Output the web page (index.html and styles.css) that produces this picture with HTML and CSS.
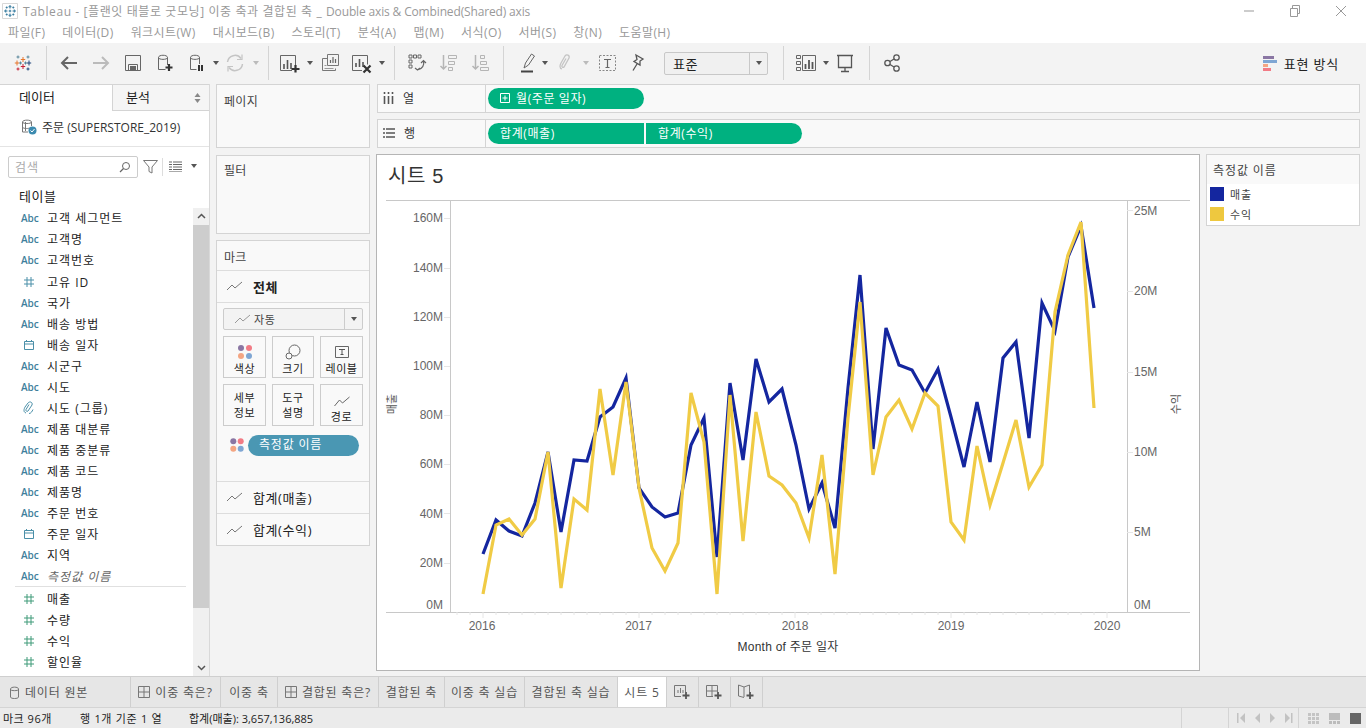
FILE: index.html
```html
<!DOCTYPE html>
<html lang="ko">
<head>
<meta charset="utf-8">
<title>Tableau</title>
<link rel="stylesheet" href="styles.css">
</head>
<body>
<div class="app">
  <header class="titlebar">
    <svg class="app-icon" width="16" height="16" viewBox="0 0 16 16"><path d="M.5.5h15v15H.5z" fill="none" stroke="#d8d8d8"/><g stroke="#3b7ea1" stroke-width="1.100"><path d="M8 2v3.500M6.500 3.700h3M8 10.500V14M6.500 12.300h3M2 8h3.500M3.700 6.500v3M10.500 8H14M12.300 6.500v3M6.700 8h2.600M8 6.700v2.600"/><path d="M4.700 3.500v2M3.700 4.500h2M11.300 3.500v2M10.300 4.500h2M4.700 10.500v2M3.700 11.500h2M11.300 10.500v2M10.300 11.500h2"/></g></svg>
    <span class="title-text"><span class="title-ko">Tableau - [플랜잇 태블로 굿모닝] 이중 축과 결합된 축 _ </span><span class="title-en">Double axis &amp; Combined(Shared) axis</span></span>
    <div class="win-btns">
      <svg width="12" height="12" viewBox="0 0 12 12"><path d="M1 6h10" stroke="#999"/></svg>
      <svg width="12" height="12" viewBox="0 0 12 12"><path d="M1.500 3.500h7v8h-7zM3.500 3.500V.5h7v8h-2" fill="none" stroke="#999"/></svg>
      <svg width="12" height="12" viewBox="0 0 12 12"><path d="M1 1l10 10M11 1L1 11" stroke="#999"/></svg>
    </div>
  </header>
  <nav class="menubar">
    <span>파일(F)</span><span>데이터(D)</span><span>워크시트(W)</span><span>대시보드(B)</span><span>스토리(T)</span><span>분석(A)</span><span>맵(M)</span><span>서식(O)</span><span>서버(S)</span><span>창(N)</span><span>도움말(H)</span>
  </nav>
  <div class="toolbar">
    <svg class="tb-btn" viewBox="0 0 32 32"><g stroke-width="1"><path d="M16 10v5M13.800 12.500h4.400" stroke="#e8762c"/><path d="M16 17v5M13.800 19.500h4.400" stroke="#c72035"/><path d="M10 13.500v5M7.800 16h4.400" stroke="#e8762c"/><path d="M22 13.500v5M19.800 16h4.400" stroke="#1f447b"/><path d="M13.500 14.500v3M12 16h3M18.500 14.500v3M17 16h3" stroke="#5b879b"/><path d="M11 8.500v3M9.500 10h3M21 8.500v3M19.500 10h3" stroke="#5b879b"/><path d="M11 20.500v3M9.500 22h3" stroke="#c72035"/><path d="M21 20.500v3M19.500 22h3" stroke="#1f447b"/></g></svg>
    <i class="tb-sep"></i>
    <svg class="tb-btn" viewBox="0 0 32 32"><path d="M24 16H9M15 10l-6 6 6 6" fill="none" stroke="#666" stroke-width="2"/></svg>
    <svg class="tb-btn" viewBox="0 0 32 32"><path d="M8 16h15M17 10l6 6-6 6" fill="none" stroke="#bbb" stroke-width="2"/></svg>
    <svg class="tb-btn" viewBox="0 0 32 32"><path d="M8.500 8.500h15v15h-15zM11.500 23.500v-6h9v6" fill="none" stroke="#666"/><rect x="13" y="19" width="6" height="4" fill="#666"/></svg>
    <svg class="tb-btn" viewBox="0 0 32 32"><path d="M16.500 22.500h-7v-12c0-3 9-3 9 0V18M9.500 10.500c0 2.500 9 2.500 9 0" fill="none" stroke="#666"/><path d="M20 17v7M16.500 20.500h7" stroke="#333" stroke-width="2.200"/></svg>
    <svg class="tb-btn" viewBox="0 0 32 32"><path d="M15.500 22.500h-6v-12c0-3 9-3 9 0V17M9.500 10.500c0 2.500 9 2.500 9 0" fill="none" stroke="#666"/><path d="M18 18v6M21 18v6" stroke="#333" stroke-width="2"/></svg>
    <span class="tb-caret w6"><i class="caret"></i></span>
    <svg class="tb-btn" viewBox="0 0 32 32"><path d="M8.500 15a7.500 7.500 0 0 1 13.500-3.500M23.500 17A7.500 7.500 0 0 1 10 20.500" fill="none" stroke="#c4c4c4" stroke-width="1.500"/><path d="M23 7.500v5h-5M9 24.500v-5h5" fill="none" stroke="#c4c4c4" stroke-width="1.200"/></svg>
    <span class="tb-caret w10"><i class="caret off"></i></span>
    <i class="tb-sep tight"></i>
    <svg class="tb-btn" viewBox="0 0 32 32"><path d="M7.500 8.500h15V20M7.500 8.500v15H19" fill="none" stroke="#666"/><path d="M11 22v-5M14.500 22v-9M18 22v-6" stroke="#555" stroke-width="1.600"/><path d="M22.500 18v7.500M18.500 22h8" stroke="#333" stroke-width="2.200"/></svg>
    <span class="tb-caret w9"><i class="caret"></i></span>
    <svg class="tb-btn" viewBox="0 0 32 32"><path d="M13.500 11.500h-5v12h13v-2" fill="none" stroke="#777"/><path d="M13.500 7.500h11v11h-11z" fill="#f3f3f3" stroke="#777"/><path d="M16.500 16v-3M19 16v-6M21.500 16v-4" stroke="#666" stroke-width="1.200"/><path d="M10.500 21.500h9M10.500 18.500h2" stroke="#999"/></svg>
    <svg class="tb-btn" viewBox="0 0 32 32"><path d="M6.500 8.500h15v9M6.500 8.500v15H16" fill="none" stroke="#666"/><path d="M10 20v-4M13.500 20v-8M17 20v-5" stroke="#555" stroke-width="1.600"/><path d="M17.500 18.500l7 7M24.500 18.500l-7 7" stroke="#333" stroke-width="2.200"/></svg>
    <span class="tb-caret w8"><i class="caret"></i></span>
    <i class="tb-sep tight-5"></i>
    <svg class="tb-btn" viewBox="0 0 32 32"><path d="M9 8h3v3H9zM13.500 8h3v3h-3zM18 8h3v3h-3zM9 13h3v3H9zM9 18h3v3H9z" fill="none" stroke="#666"/><path d="M23.500 14c1 4-1 8-6 9M15 21l2.500 2 2.500-2M21 16l2.500-2.500L26 16" fill="none" stroke="#666" stroke-width="1.200"/></svg>
    <svg class="tb-btn" viewBox="0 0 32 32"><path d="M11.500 8v14M8.500 19l3 3 3-3" fill="none" stroke="#b5b5b5" stroke-width="1.500"/><path d="M16.500 8.500h8v3h-8zM16.500 14.500h6v3h-6zM16.500 20.500h4v3h-4z" fill="none" stroke="#b5b5b5"/></svg>
    <svg class="tb-btn" viewBox="0 0 32 32"><path d="M11.500 8v14M8.500 19l3 3 3-3" fill="none" stroke="#b5b5b5" stroke-width="1.500"/><path d="M16.500 8.500h4v3h-4zM16.500 14.500h6v3h-6zM16.500 20.500h8v3h-8z" fill="none" stroke="#b5b5b5"/></svg>
    <i class="tb-sep"></i>
    <svg class="tb-btn narrow" viewBox="0 0 30 32"><path d="M14 21l1.500-5 6-9 3 2-6 9z" fill="none" stroke="#666"/><path d="M11 24.500h12" stroke="#444" stroke-width="2"/></svg>
    <span class="tb-caret w10"><i class="caret"></i></span>
    <svg class="tb-btn clip" viewBox="0 0 30 32"><path d="M12 22c-3-1-2-4-1-6l4-7c1.500-2 5-1 4 2l-5 9c-1 1-2.500 0-2-1.500l4-7" fill="none" stroke="#c4c4c4" stroke-width="1.300"/></svg>
    <span class="tb-caret w11"><i class="caret off"></i></span>
    <svg class="tb-btn" viewBox="0 0 32 32"><path d="M8.500 8.500h16v15h-16z" fill="none" stroke="#888" stroke-dasharray="2 1.500"/><path d="M13 12.500h7M16.500 12.500v8M14.500 20.500h4" fill="none" stroke="#666" stroke-width="1.200"/></svg>
    <svg class="tb-btn pin" viewBox="0 0 30 32"><path d="M13 8l7 4-3 2 0 4-6-3.500 3-2zM14 17l-4 6.500" fill="none" stroke="#555" stroke-width="1.300"/></svg>
    <div class="tb-select"><span class="tb-select-text">표준</span><span class="tb-select-btn"><i class="caret"></i></span></div>
    <i class="tb-sep wide"></i>
    <svg class="tb-btn" viewBox="0 0 32 32"><path d="M6.500 8.500h4v3h-4zM6.500 14.500h4v3h-4zM6.500 20.500h4v3h-4zM12.500 8.500h13v15h-13z" fill="none" stroke="#666"/><path d="M15.500 22v-5M19 22v-9M22.500 22v-7" stroke="#555" stroke-width="1.800"/></svg>
    <span class="tb-caret w7"><i class="caret"></i></span>
    <svg class="tb-btn" viewBox="0 0 32 32"><path d="M8 8.500h16M9.500 9v11.500h13V9M16 20.500v4M12 24.500h8" fill="none" stroke="#555" stroke-width="1.300"/></svg>
    <i class="tb-sep last"></i>
    <svg class="tb-btn" viewBox="0 0 32 32"><g fill="none" stroke="#555" stroke-width="1.300"><circle cx="11.500" cy="16" r="2.700"/><circle cx="20.500" cy="10.500" r="2.700"/><circle cx="20.500" cy="21.500" r="2.700"/><path d="M14 14.500l4-2.500M14 17.500l4 2.500"/></g></svg>
    <div class="showme">
      <svg width="14" height="15" viewBox="0 0 14 15"><rect width="11" height="3" fill="#8a76a3"/><rect y="4" width="14" height="3" fill="#7fa6d3"/><rect y="8" width="5" height="3" fill="#f4a582"/><rect y="12" width="8" height="3" fill="#f27b85"/></svg>
      <span>표현 방식</span>
    </div>
  </div>

  <main class="workspace">
    <aside class="datapane">
      <div class="pane-tabs"><span class="tab-data">데이터</span><span class="tab-analysis">분석<svg width="7" height="10" viewBox="0 0 7 10"><path d="M3.500 0l3 4h-6zM3.500 10l3-4h-6z" fill="#888"/></svg></span></div>
      <div class="source">
        <svg width="18" height="18" viewBox="0 0 18 18"><path d="M8 14H2.500V4c0-2.500 9-2.500 9 0v4M2.500 4c0 2 9 2 9 0M2.500 9c0 1.500 5 2 7 1M5.500 4v9" fill="none" stroke="#777"/><circle cx="12.500" cy="12.500" r="4" fill="#3c8bb0"/><path d="M10.500 12.500l1.500 1.500 2.500-3" fill="none" stroke="#fff"/></svg>
        <span>주문 (SUPERSTORE_2019)</span>
      </div>
      <div class="searchrow">
        <div class="searchbox"><span>검색</span><svg width="12" height="12" viewBox="0 0 12 12"><circle cx="7" cy="5" r="3.500" fill="none" stroke="#666"/><path d="M4.500 7.500L1 11" stroke="#666" stroke-width="1.300"/></svg></div>
        <svg class="filter" width="15" height="15" viewBox="0 0 15 15"><path d="M.5 1.500h14L9 8v6L6 12.500V8z" fill="none" stroke="#777"/></svg>
        <i class="search-sep"></i>
        <svg class="list-ic" width="13" height="11" viewBox="0 0 13 11"><path d="M0 1h3M4 1h9M0 3.500h3M4 3.500h9M0 6h3M4 6h9M0 8.500h3M4 8.500h9" stroke="#666"/><path d="M0 10.500h13" stroke="#aaa"/></svg>
        <i class="caret list-caret"></i>
      </div>
      <div class="tables-head">테이블</div>
      <div class="fields-wrap">
        <ul class="fields">
          <li><span class="ty abc">Abc</span>고객 세그먼트</li>
          <li><span class="ty abc">Abc</span>고객명</li>
          <li><span class="ty abc">Abc</span>고객번호</li>
          <li><span class="ty"><svg class="hash dim" width="12" height="12" viewBox="0 0 12 12"><path d="M4 1v10M8 1v10M1 4h10M1 8h10"/></svg></span>고유 ID</li>
          <li><span class="ty abc">Abc</span>국가</li>
          <li><span class="ty abc">Abc</span>배송 방법</li>
          <li><span class="ty"><svg width="12" height="12" viewBox="0 0 12 12"><path d="M1.500 2.500h9v8h-9zM1.500 5h9M3.500 1v2M8.500 1v2" fill="none" stroke="#4a8fa8"/></svg></span>배송 일자</li>
          <li><span class="ty abc">Abc</span>시군구</li>
          <li><span class="ty abc">Abc</span>시도</li>
          <li><span class="ty"><svg width="12" height="14" viewBox="0 0 12 14"><path d="M3 12c-3-1-2-4-1-6l3-4c1.500-2 5-1 4 2l-4 6c-1 1-2.500 0-2-1.500l3-5M6 12.500c2 0 3-2 4-4" fill="none" stroke="#4a8fa8"/></svg></span>시도 (그룹)</li>
          <li><span class="ty abc">Abc</span>제품 대분류</li>
          <li><span class="ty abc">Abc</span>제품 중분류</li>
          <li><span class="ty abc">Abc</span>제품 코드</li>
          <li><span class="ty abc">Abc</span>제품명</li>
          <li><span class="ty abc">Abc</span>주문 번호</li>
          <li><span class="ty"><svg width="12" height="12" viewBox="0 0 12 12"><path d="M1.500 2.500h9v8h-9zM1.500 5h9M3.500 1v2M8.500 1v2" fill="none" stroke="#4a8fa8"/></svg></span>주문 일자</li>
          <li><span class="ty abc">Abc</span>지역</li>
          <li class="generated"><span class="ty abc">Abc</span>측정값 이름</li>
          <li><span class="ty"><svg class="hash" width="12" height="12" viewBox="0 0 12 12"><path d="M4 1v10M8 1v10M1 4h10M1 8h10"/></svg></span>매출</li>
          <li><span class="ty"><svg class="hash" width="12" height="12" viewBox="0 0 12 12"><path d="M4 1v10M8 1v10M1 4h10M1 8h10"/></svg></span>수량</li>
          <li><span class="ty"><svg class="hash" width="12" height="12" viewBox="0 0 12 12"><path d="M4 1v10M8 1v10M1 4h10M1 8h10"/></svg></span>수익</li>
          <li><span class="ty"><svg class="hash" width="12" height="12" viewBox="0 0 12 12"><path d="M4 1v10M8 1v10M1 4h10M1 8h10"/></svg></span>할인율</li>
        </ul>
        <div class="scrollbar">
          <span class="sb-btn sb-up"><svg width="9" height="6" viewBox="0 0 9 6"><path d="M1 5l3.500-3.500L8 5" fill="none" stroke="#555" stroke-width="1.500"/></svg></span>
          <span class="sb-thumb"></span>
          <span class="sb-track"></span>
          <span class="sb-btn"><svg width="9" height="6" viewBox="0 0 9 6"><path d="M1 1l3.500 3.500L8 1" fill="none" stroke="#555" stroke-width="1.500"/></svg></span>
        </div>
      </div>
    </aside>

    <section class="cards">
      <div class="card pages"><div class="card-title">페이지</div></div>
      <div class="card filters"><div class="card-title">필터</div></div>
      <div class="card marks">
        <div class="marks-title">마크</div>
        <div class="marks-row strong"><svg class="line-ic" width="16" height="10" viewBox="0 0 16 10"><path d="M0 9l5-5 3 3 7-6" fill="none" stroke="#777"/></svg>전체</div>
        <div class="marks-all">
          <div class="mark-select"><svg width="16" height="10" viewBox="0 0 16 10"><path d="M0 9l5-5 3 3 7-6" fill="none" stroke="#999"/></svg><span>자동</span><span class="mark-select-btn"><i class="caret"></i></span></div>
          <div class="mark-grid">
            <div class="mbtn"><svg width="16" height="16" viewBox="0 0 16 16"><circle cx="4" cy="4" r="3" fill="#8a76a3"/><circle cx="12" cy="4" r="3" fill="#f27b85"/><circle cx="4" cy="12" r="3" fill="#f4a582"/><circle cx="12" cy="12" r="3" fill="#7fa6d3"/></svg><span>색상</span></div>
            <div class="mbtn"><svg width="16" height="16" viewBox="0 0 16 16"><circle cx="9.500" cy="6.500" r="5.500" fill="none" stroke="#666"/><circle cx="4" cy="12" r="3" fill="#fafafa" stroke="#666"/></svg><span>크기</span></div>
            <div class="mbtn"><svg width="16" height="16" viewBox="0 0 16 16"><path d="M1.500 2.500h13v11h-13z" fill="none" stroke="#666"/><path d="M5 5.500h6M8 5.500v5M6.500 10.500h3" fill="none" stroke="#555"/></svg><span>레이블</span></div>
            <div class="mbtn text">세부<br>정보</div>
            <div class="mbtn text">도구<br>설명</div>
            <div class="mbtn"><svg width="16" height="12" viewBox="0 0 16 12"><path d="M.5 10l5-6 3 3 7-6" fill="none" stroke="#666"/></svg><span>경로</span></div>
          </div>
          <div class="mark-pill-row">
            <svg width="14" height="14" viewBox="0 0 14 14"><circle cx="3.300" cy="3.300" r="3" fill="#8a76a3"/><circle cx="10.700" cy="3.300" r="3" fill="#f27b85"/><circle cx="3.300" cy="10.700" r="3" fill="#f4a582"/><circle cx="10.700" cy="10.700" r="3" fill="#7fa6d3"/></svg>
            <span class="mark-pill">측정값 이름</span>
          </div>
        </div>
        <div class="marks-row"><svg class="line-ic" width="16" height="10" viewBox="0 0 16 10"><path d="M0 9l5-5 3 3 7-6" fill="none" stroke="#777"/></svg>합계(매출)</div>
        <div class="marks-row"><svg class="line-ic" width="16" height="10" viewBox="0 0 16 10"><path d="M0 9l5-5 3 3 7-6" fill="none" stroke="#777"/></svg>합계(수익)</div>
      </div>
    </section>

    <section class="main-area">
      <div class="shelf">
        <div class="shelf-label"><svg width="11" height="12" viewBox="0 0 11 12"><path d="M1.500 4v8M5.500 4v8M9.500 4v8M1.500 0v2M5.500 0v2M9.500 0v2" stroke="#555" stroke-width="1.600"/></svg><span>열</span></div>
        <div class="shelf-pills"><span class="pill"><svg width="10" height="10" viewBox="0 0 10 10"><path d="M.5.500h9v9h-9zM5 2.500v5M2.500 5h5" fill="none" stroke="#fff"/></svg>월(주문 일자)</span></div>
      </div>
      <div class="shelf">
        <div class="shelf-label"><svg width="12" height="10" viewBox="0 0 12 10"><path d="M3 1h9M3 5h9M3 9h9M0 1h2M0 5h2M0 9h2" stroke="#555" stroke-width="1.500"/></svg><span>행</span></div>
        <div class="shelf-pills"><span class="pill left">합계(매출)</span><span class="pill right">합계(수익)</span></div>
      </div>
      <div class="view-row">
        <div class="viz">
          <h1 class="viz-title">시트 5</h1>
          <svg class="chart" viewBox="377 200 822 470" width="822" height="470">
            <g stroke="#c8c8c8" fill="none">
              <path d="M386 200.500H1190M386 612.500H1190M450.500 200V612M1127.500 200V612"/>
            </g>
            <g stroke="#e6e6e6" fill="none">
              <path d="M444 218.500h6M444 268.500h6M444 317.500h6M444 366.500h6M444 415.500h6M444 464.500h6M444 513.500h6M444 563.500h6M1127 210.500h6M1127 291.500h6M1127 372.500h6M1127 452.500h6M1127 532.500h6"/>
              <path class="ticks" d="M457 612v3M470 612v3M483 612v6M496 612v3M509 612v3M522 612v3M535 612v3M548 612v3M561 612v3M574 612v3M587 612v3M600 612v3M613 612v3M626 612v3M639 612v6M652 612v3M665 612v3M678 612v3M691 612v3M704 612v3M717 612v3M730 612v3M743 612v3M756 612v3M769 612v3M782 612v3M795 612v6M808 612v3M821 612v3M834 612v3M847 612v3M860 612v3M873 612v3M886 612v3M899 612v3M912 612v3M925 612v3M938 612v3M951 612v6M964 612v3M977 612v3M990 612v3M1003 612v3M1016 612v3M1029 612v3M1042 612v3M1055 612v3M1068 612v3M1081 612v3M1094 612v3M1107 612v6"/>
            </g>
            <g class="axis-text">
              <text x="443" y="222" text-anchor="end">160M</text>
              <text x="443" y="272" text-anchor="end">140M</text>
              <text x="443" y="321" text-anchor="end">120M</text>
              <text x="443" y="370" text-anchor="end">100M</text>
              <text x="443" y="419" text-anchor="end">80M</text>
              <text x="443" y="468" text-anchor="end">60M</text>
              <text x="443" y="518" text-anchor="end">40M</text>
              <text x="443" y="567" text-anchor="end">20M</text>
              <text x="443" y="609" text-anchor="end">0M</text>
              <text x="1134" y="215">25M</text>
              <text x="1134" y="295">20M</text>
              <text x="1134" y="376">15M</text>
              <text x="1134" y="456">10M</text>
              <text x="1134" y="536">5M</text>
              <text x="1134" y="609">0M</text>
              <text x="482" y="630" text-anchor="middle">2016</text>
              <text x="638.500" y="630" text-anchor="middle">2017</text>
              <text x="795" y="630" text-anchor="middle">2018</text>
              <text x="951" y="630" text-anchor="middle">2019</text>
              <text x="1107" y="630" text-anchor="middle">2020</text>
            </g>
            <text class="axis-title" x="788" y="651" text-anchor="middle">Month of 주문 일자</text>
            <text class="axis-name" transform="translate(396 404) rotate(-90)" text-anchor="middle">매출</text>
            <text class="axis-name" transform="translate(1180 404) rotate(-90)" text-anchor="middle">수익</text>
            <polyline class="line blue" points="483,554 496,520 509,531 522,536 535,503 548,452 561,532 574,460 587,461 600,417 613,407 626,378 639,488 652,507 665,517 678,513 691,445 704,418 717,557 730,383 743,460 756,359 769,402 782,389 796,445 809,509 822,483 835,528 848,388 860,275 873,449 886,328 899,365 912,370 925,393 938,369 951,417 964,467 977,402 990,462 1003,358 1016,342 1029,438 1042,303 1055,331 1068,257 1081,226 1094,308"/>
            <polyline class="line yellow" points="483,594 496,525 509,519 522,535 535,519 548,452 561,588 574,499 587,510 600,389 613,475 626,382 639,488 652,548 665,571 678,543 691,393 704,442 717,594 730,395 743,541 756,412 769,476 782,485 796,503 809,538 822,455 835,574 848,418 860,302 873,475 886,417 899,400 912,429 925,393 938,406 951,522 964,540 977,446 990,505 1003,463 1016,420 1029,487 1042,465 1055,312 1068,255 1081,222 1094,408"/>
          </svg>
        </div>
        <aside class="legend">
          <div class="legend-title">측정값 이름</div>
          <div class="legend-row"><i class="swatch sw-blue"></i>매출</div>
          <div class="legend-row"><i class="swatch sw-yellow"></i>수익</div>
        </aside>
      </div>
    </section>
  </main>

  <div class="tabs">
    <span class="tab source-tab"><svg width="9" height="13" viewBox="0 0 9 13"><path d="M.5 3v8c0 2 8 2 8 0V3c0-2.500-8-2.500-8 0zM.5 3.500c0 1.500 8 1.500 8 0" fill="none" stroke="#777"/></svg>데이터 원본</span>
    <span class="tab t1"><svg width="12" height="12" viewBox="0 0 12 12"><path d="M.5.500h11v11H.5zM6 .5v11M.5 6h11" fill="none" stroke="#777"/></svg>이중 축은?</span>
    <span class="tab t2">이중 축</span>
    <span class="tab t3"><svg width="12" height="12" viewBox="0 0 12 12"><path d="M.5.500h11v11H.5zM6 .5v11M.5 6h11" fill="none" stroke="#777"/></svg>결합된 축은?</span>
    <span class="tab t4">결합된 축</span>
    <span class="tab t5">이중 축 실습</span>
    <span class="tab t6">결합된 축 실습</span>
    <span class="tab active">시트 5</span>
    <span class="tab add"><svg width="17" height="16" viewBox="0 0 17 16"><path d="M.5 1.500h11V8M.5 1.500v11H7" fill="none" stroke="#777"/><path d="M4 9V6M6.500 9V4M9 9V6" stroke="#777"/><path d="M12 8v7M8.500 11.500h7" stroke="#555" stroke-width="1.800"/></svg></span>
    <span class="tab add"><svg width="17" height="16" viewBox="0 0 17 16"><path d="M7 12.500H.5v-11h11V8M6 1.500v11M.5 7h11" fill="none" stroke="#777"/><path d="M12 8v7M8.500 11.500h7" stroke="#555" stroke-width="1.800"/></svg></span>
    <span class="tab add"><svg width="17" height="16" viewBox="0 0 17 16"><path d="M6 13.500l-5.500-1.500v-11L6 3l5.500-2v7M6 3v10" fill="none" stroke="#777"/><path d="M12 8v7M8.500 11.500h7" stroke="#555" stroke-width="1.800"/></svg></span>
  </div>
  <footer class="status">
    <span class="st1">마크 96개</span><span class="st2">행 1개 기준 1 열</span><span class="st3">합계(매출): 3,657,136,885</span>
    <div class="st-nav">
      <span class="st-cell st-gap"></span>
      <span class="st-cell st-arrows"><svg width="56" height="10" viewBox="0 0 56 10"><g fill="#c2c2c2"><path d="M0 0h1.500v10H0zM8 0v10L3 5zM23 0v10l-5-5zM33 0l5 5-5 5zM48 0l5 5-5 5zM54 0h1.500v10H54z"/></g></svg></span>
      <span class="st-cell st-views">
        <svg width="11" height="11" viewBox="0 0 11 11"><path d="M0 0h3v3H0zM4 0h3v3H4zM8 0h3v3H8zM0 4h3v3H0zM4 4h3v3H4zM8 4h3v3H8zM0 8h3v3H0zM4 8h3v3H4zM8 8h3v3H8z" fill="#c4c4c4"/></svg>
        <svg width="11" height="11" viewBox="0 0 11 11"><path d="M0 0h11v7H0zM0 8h3v3H0zM4 8h3v3H4zM8 8h3v3H8z" fill="#bcbcbc"/></svg>
        <svg width="11" height="11" viewBox="0 0 11 11"><path d="M0 0h11v11H0z" fill="#666"/></svg>
      </span>
    </div>
  </footer>
</div>
</body>
</html>
```
FILE: styles.css
```css
* { box-sizing: border-box; }
html, body { margin: 0; padding: 0; }
body {
  width: 1366px;
  height: 728px;
  overflow: hidden;
  font-family: "Open Sans", "Noto Sans CJK KR", sans-serif;
  font-size: 12px;
  color: #333;
  background: #f3f3f3;
}
.app { display: flex; flex-direction: column; height: 728px; }

.titlebar { height: 22px; background: #fff; display: flex; align-items: center; padding-left: 2px; color: #999; }
.app-icon { margin-right: 5px; flex: none; }
.title-text { font-size: 12px; white-space: pre; }
.title-ko { letter-spacing: .6px; }
.title-en { letter-spacing: -.15px; }
.win-btns { margin-left: auto; display: flex; gap: 34px; padding-right: 19px; align-items: center; }

.menubar { height: 21px; background: #fff; display: flex; gap: 17px; padding-left: 8px; align-items: center; color: #999; white-space: nowrap; letter-spacing: .4px; }

.toolbar { height: 41px; background: #f3f3f3; display: flex; align-items: center; padding-left: 7px; }
.tb-btn { width: 32px; height: 32px; flex: none; }
.tb-btn.narrow { width: 30px; }
.tb-btn.clip { width: 30px; }
.tb-btn.pin { width: 30px; }
.tb-sep { width: 1px; height: 34px; background: #d4d4d4; margin: 0 6px 0 7px; flex: none; }
.tb-sep.tight { margin-left: 7px; margin-right: 4px; }
.tb-sep.tight-5 { margin-left: 8px; margin-right: 5px; }
.tb-sep.wide { margin-left: 15px; }
.tb-sep.last { margin-left: 8px; }
.tb-caret { display: flex; justify-content: center; flex: none; }
.w6 { width: 6px; } .w7 { width: 7px; } .w8 { width: 8px; } .w9 { width: 9px; } .w10 { width: 10px; } .w11 { width: 11px; }
.caret { display: block; width: 0; height: 0; border-left: 3px solid transparent; border-right: 3px solid transparent; border-top: 4px solid #555; flex: none; }
.caret.off { border-top-color: #bbb; }
.tb-select { width: 104px; height: 23px; margin-left: 11px; display: flex; align-items: center; border: 1px solid #c8c8c8; border-radius: 2px; background: #f0f0f0; font-size: 13px; color: #222; flex: none; }
.tb-select-text { flex: 1; padding-left: 8px; letter-spacing: .5px; }
.tb-select-btn { width: 18px; height: 100%; border-left: 1px solid #c8c8c8; display: flex; align-items: center; justify-content: center; }
.showme { margin-left: auto; padding-right: 27px; display: flex; align-items: center; gap: 7px; font-size: 13px; color: #222; letter-spacing: .8px; }

.workspace { height: 593px; display: flex; background: #f3f3f3; }

.datapane { width: 210px; flex: none; background: #fff; border-right: 1px solid #d9d9d9; display: flex; flex-direction: column; }
.pane-tabs { height: 27px; display: flex; font-size: 13px; color: #222; border-top: 1px solid #d4d4d4; }
.tab-data { width: 112px; padding: 2px 0 0 19px; }
.tab-analysis { flex: 1; padding: 2px 8px 0 13px; background: #f5f5f5; border: 1px solid #d4d4d4; border-width: 0 0 1px 1px; display: flex; justify-content: space-between; align-items: flex-start; }
.tab-analysis svg { margin-top: 6px; }
.source { height: 36px; padding: 7px 0 0 20px; display: flex; align-items: flex-start; gap: 4px; border-bottom: 1px solid #e4e4e4; color: #333; }
.searchrow { height: 34px; padding: 9px 0 0 8px; display: flex; align-items: flex-start; flex: none; }
.searchbox { width: 130px; height: 22px; border: 1px solid #ccc; border-radius: 2px; padding: 0 6px; display: flex; align-items: center; justify-content: space-between; color: #aaa; letter-spacing: 1px; }
.filter { margin: 3px 0 0 5px; }
.search-sep { width: 1px; height: 18px; background: #ddd; margin: 2px 6px 0 4px; }
.list-ic { margin-top: 5px; }
.list-caret { margin: 8px 0 0 9px; }
.tables-head { height: 27px; padding: 5px 0 0 19px; font-size: 13px; color: #222; flex: none; line-height: 20px; letter-spacing: .5px; }
.fields-wrap { flex: 1; display: flex; min-height: 0; }
.fields { list-style: none; margin: 0; padding: 0; flex: 1; }
.fields li { height: 21.050px; display: flex; align-items: center; padding-left: 21px; color: #222; white-space: nowrap; letter-spacing: 1px; }
.fields li.generated { font-style: italic; color: #666; position: relative; margin-bottom: 2px; }
.fields li.generated::after { content: ""; position: absolute; left: 15px; right: 7px; bottom: 0; height: 1px; background: #e0e0e0; }
.ty { width: 26px; flex: none; display: flex; align-items: center; font-style: normal; letter-spacing: 0; }
.ty svg { margin-left: 2px; }
.abc { font: 600 10px "Open Sans", sans-serif; color: #3f7f9c; }
.hash { fill: none; stroke: #3f9a78; }
.hash.dim { stroke: #4a8fa8; }
.scrollbar { width: 16px; flex: none; display: flex; flex-direction: column; background: #f0f0f0; }
.sb-btn { height: 17px; display: flex; align-items: center; justify-content: center; flex: none; background: #f0f0f0; }
.sb-thumb { height: 383px; background: #cdcdcd; flex: none; }
.sb-track { flex: 1; }

.cards { width: 154px; margin-left: 6px; flex: none; display: flex; flex-direction: column; gap: 7px; }
.card { background: #f9f9f9; border: 1px solid #d4d4d4; flex: none; }
.card-title { padding: 7px 0 0 7px; color: #444; letter-spacing: .3px; }
.filters .card-title { padding-top: 5px; }
.pages { height: 64px; }
.filters { height: 79px; }
.marks { height: 306px; margin-top: -1px; }
.marks-title { height: 30px; padding: 7px 0 0 7px; color: #444; border-bottom: 1px solid #ddd; letter-spacing: .3px; }
.marks-row { height: 32px; display: flex; align-items: center; padding-left: 10px; gap: 10px; font-size: 13px; color: #222; border-bottom: 1px solid #ddd; letter-spacing: .6px; }
.marks-row:last-child { border-bottom: 0; }
.marks-row.strong { font-weight: 700; }
.line-ic { flex: none; }
.marks-all { height: 179px; padding: 5px 6px 0; border-bottom: 1px solid #ddd; }
.mark-select { height: 22px; background: #f3f3f3; border: 1px solid #ccc; border-radius: 2px; display: flex; align-items: center; padding-left: 11px; gap: 3px; font-size: 11px; color: #444; letter-spacing: .6px; }
.mark-select-btn { margin-left: auto; width: 18px; height: 100%; border-left: 1px solid #ccc; display: flex; align-items: center; justify-content: center; }
.mark-grid { display: grid; grid-template-columns: 43px 42px 43px; column-gap: 6px; row-gap: 6px; margin-top: 6px; grid-auto-rows: 42px; }
.mbtn { border: 1px solid #ccc; display: flex; flex-direction: column; align-items: center; justify-content: flex-end; font-size: 11px; color: #222; padding-bottom: 1px; gap: 1px; line-height: 15px; letter-spacing: .6px; }
.mbtn.text { text-align: center; padding: 5px 0 0; display: block; }
.mark-pill-row { display: flex; align-items: center; margin: 9px 0 0 7px; gap: 4px; }
.mark-pill { width: 111px; height: 21px; border-radius: 11px; background: #4a97b3; color: #fff; padding-left: 11px; line-height: 19px; letter-spacing: .8px; }

.main-area { flex: 1; min-width: 0; margin-left: 7px; padding-right: 6px; display: flex; flex-direction: column; gap: 6px; }
.shelf { height: 29px; flex: none; background: #f9f9f9; border: 1px solid #d4d4d4; display: flex; }
.shelf-label { width: 108px; height: 100%; border-right: 1px solid #d4d4d4; display: flex; align-items: center; padding-left: 5px; gap: 9px; font-size: 12px; color: #333; flex: none; }
.shelf-pills { display: flex; align-items: center; padding-left: 2px; gap: 2px; }
.pill { width: 156px; height: 21px; background: #00b180; color: #fff; border-radius: 11px; padding: 0 0 0 12px; display: flex; align-items: center; gap: 6px; white-space: nowrap; letter-spacing: .6px; }
.pill.left { border-radius: 11px 0 0 11px; }
.pill.right { border-radius: 0 11px 11px 0; }
.view-row { display: flex; gap: 6px; }
.viz { width: 824px; height: 517px; margin-left: -1px; background: #fff; border: 1px solid #b5b5b5; flex: none; }
.viz-title { margin: 0; height: 45px; padding: 8px 0 0 11px; font-size: 20px; line-height: 26px; font-weight: 400; color: #333; font-family: "Liberation Sans", "Noto Sans CJK KR", sans-serif; letter-spacing: .6px; }
.chart { display: block; }
.axis-text text { font: 12px "Liberation Sans", sans-serif; fill: #666; }
.axis-title { font: 12px "Liberation Sans", "Noto Sans CJK KR", sans-serif; fill: #333; letter-spacing: .25px; }
.axis-name { font: 11px "Noto Sans CJK KR", sans-serif; fill: #555; }
.line { fill: none; stroke-width: 3.200; stroke-linejoin: miter; stroke-miterlimit: 4; }
.blue { stroke: #14269f; }
.yellow { stroke: #f0cb45; }
.legend { width: 154px; height: 72px; background: #fff; border: 1px solid #d4d4d4; flex: none; }
.legend-title { height: 29px; background: #f9f9f9; padding: 6px 0 0 6px; color: #444; letter-spacing: .9px; }
.legend-row { height: 20px; display: flex; align-items: center; padding-left: 3px; font-size: 11px; color: #444; gap: 6px; letter-spacing: .8px; }
.swatch { width: 14px; height: 14px; flex: none; }
.sw-blue { background: #14269f; }
.sw-yellow { background: #eec83f; }

.tabs { height: 31px; background: #e6e6e6; border-top: 1px solid #cfcfcf; display: flex; color: #555; white-space: nowrap; flex: none; letter-spacing: .8px; }
.tab { display: flex; align-items: center; justify-content: center; gap: 5px; border-right: 1px solid #cfcfcf; padding: 0 6px; flex: none; }
.source-tab { width: 131px; justify-content: flex-start; padding-left: 10px; gap: 6px; }
.t1 { width: 90px; } .t2 { width: 57px; } .t3 { width: 101px; } .t4 { width: 66px; } .t5 { width: 80px; } .t6 { width: 93px; }
.tab.active { width: 49px; background: #fff; padding: 0; }
.tab.add { width: 32px; padding: 0; }
.status { height: 21px; background: #ebebeb; border-top: 1px solid #d4d4d4; display: flex; align-items: center; font-size: 11px; color: #222; white-space: nowrap; flex: none; }
.st1 { margin-left: 3px; width: 77px; letter-spacing: .5px; }
.st2 { width: 109px; letter-spacing: .7px; }
.st-nav { margin-left: auto; height: 100%; display: flex; align-items: stretch; }
.st-cell { display: flex; align-items: center; border-left: 1px solid #d4d4d4; }
.st-gap { width: 47px; }
.st-arrows { width: 70px; padding-left: 8px; }
.st-views { width: 68px; padding-left: 9px; gap: 10px; }
```
